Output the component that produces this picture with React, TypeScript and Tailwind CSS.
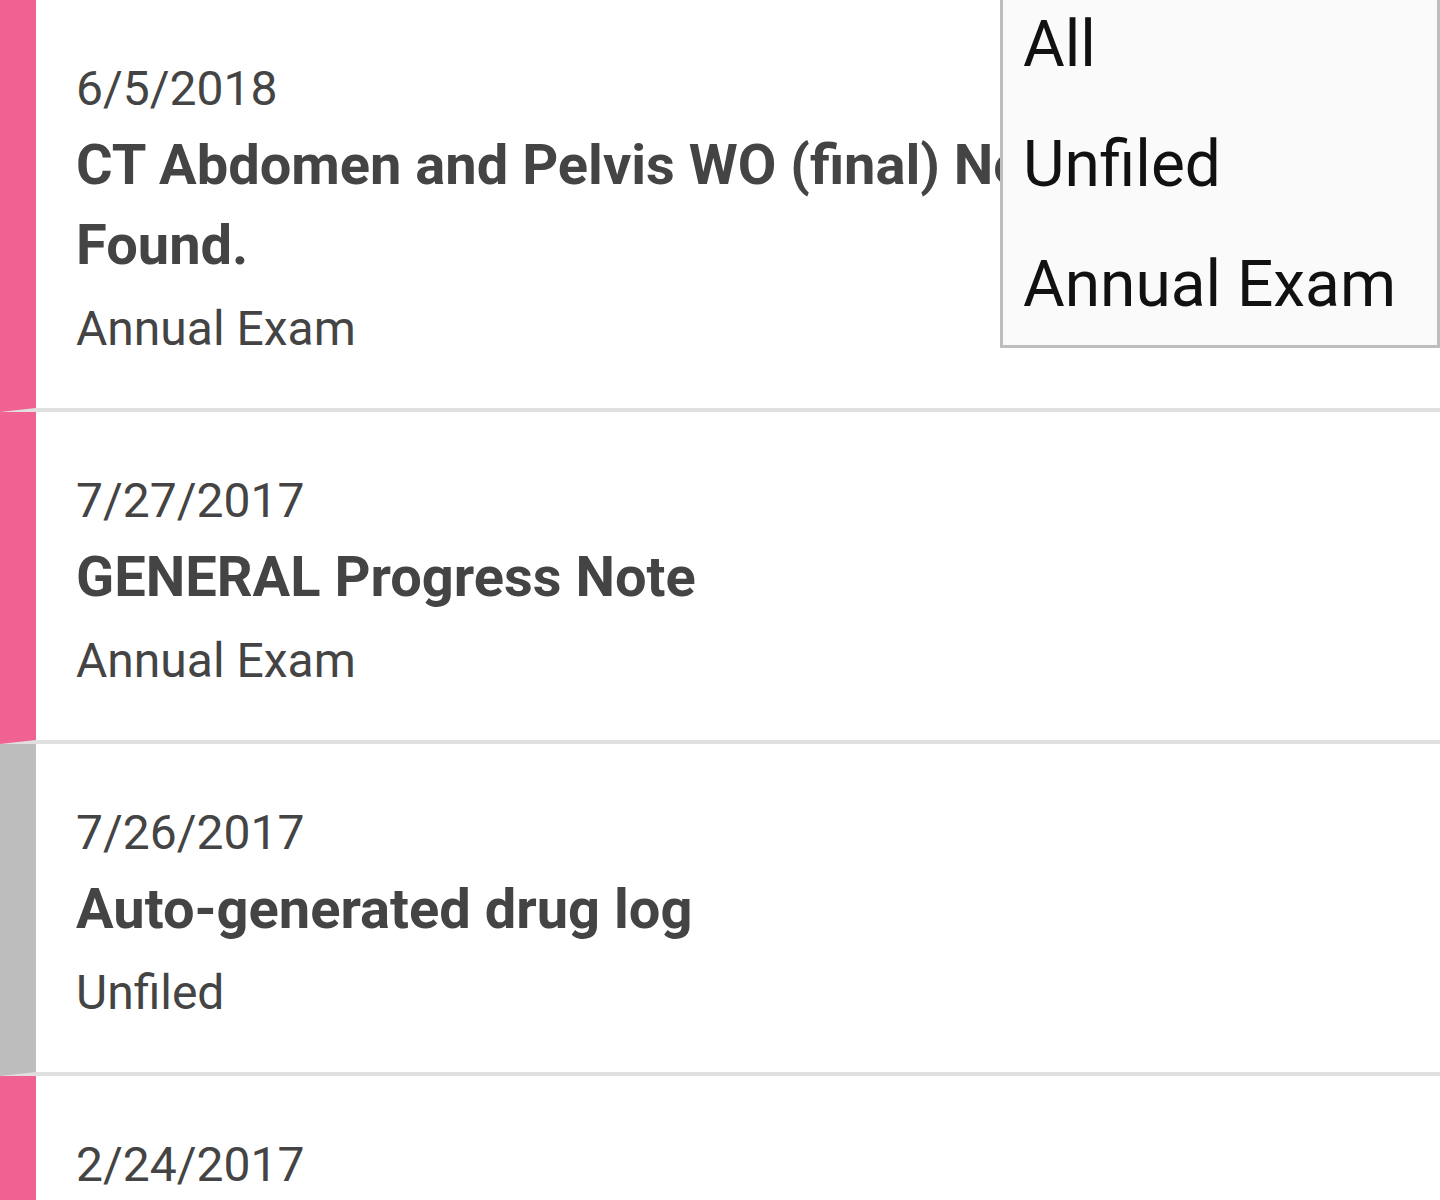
const notes = [
  {
    date: "6/5/2018",
    title: "CT Abdomen and Pelvis WO (final) No Results Found.",
    category: "Annual Exam",
    filed: true,
  },
  {
    date: "7/27/2017",
    title: "GENERAL Progress Note",
    category: "Annual Exam",
    filed: true,
  },
  {
    date: "7/26/2017",
    title: "Auto-generated drug log",
    category: "Unfiled",
    filed: false,
  },
  {
    date: "2/24/2017",
    title: "GENERAL Progress Note",
    category: "Annual Exam",
    filed: true,
  },
];

const options = ["All", "Unfiled", "Annual Exam"];

function NoteRow({ note }: { note: (typeof notes)[number] }) {
  return (
    <li
      className={
        "border-l-[36px] border-b-4 border-b-[#e0e0e0] pl-[40px] pr-[40px] pt-[53px] pb-[43px] text-[#444444] " +
        (note.filed ? "border-l-[#f06292]" : "border-l-[#bdbdbd]")
      }
    >
      <div className="text-[48px] leading-[72px]">{note.date}</div>
      <div className="text-[56px] leading-[80px] font-bold mb-[8px]">
        {note.title}
      </div>
      <div className="text-[48px] leading-[72px]">{note.category}</div>
    </li>
  );
}

export default function App() {
  return (
    <div
      className="relative h-[1200px] w-[1440px] overflow-hidden bg-white"
      style={{ fontFamily: "Roboto, 'Liberation Sans', sans-serif" }}
    >
      <ul>
        {notes.map((n, i) => (
          <NoteRow key={i} note={n} />
        ))}
      </ul>

      {/* open filter dropdown */}
      <div className="absolute right-0 top-[-18px] w-[440px] border-[3px] border-[#bdbdbd] bg-[#fafafa]">
        {options.map((o) => (
          <div
            key={o}
            className="h-[120px] pl-[20px] text-[64px] leading-[120px] text-[#111111]"
          >
            {o}
          </div>
        ))}
      </div>
    </div>
  );
}
